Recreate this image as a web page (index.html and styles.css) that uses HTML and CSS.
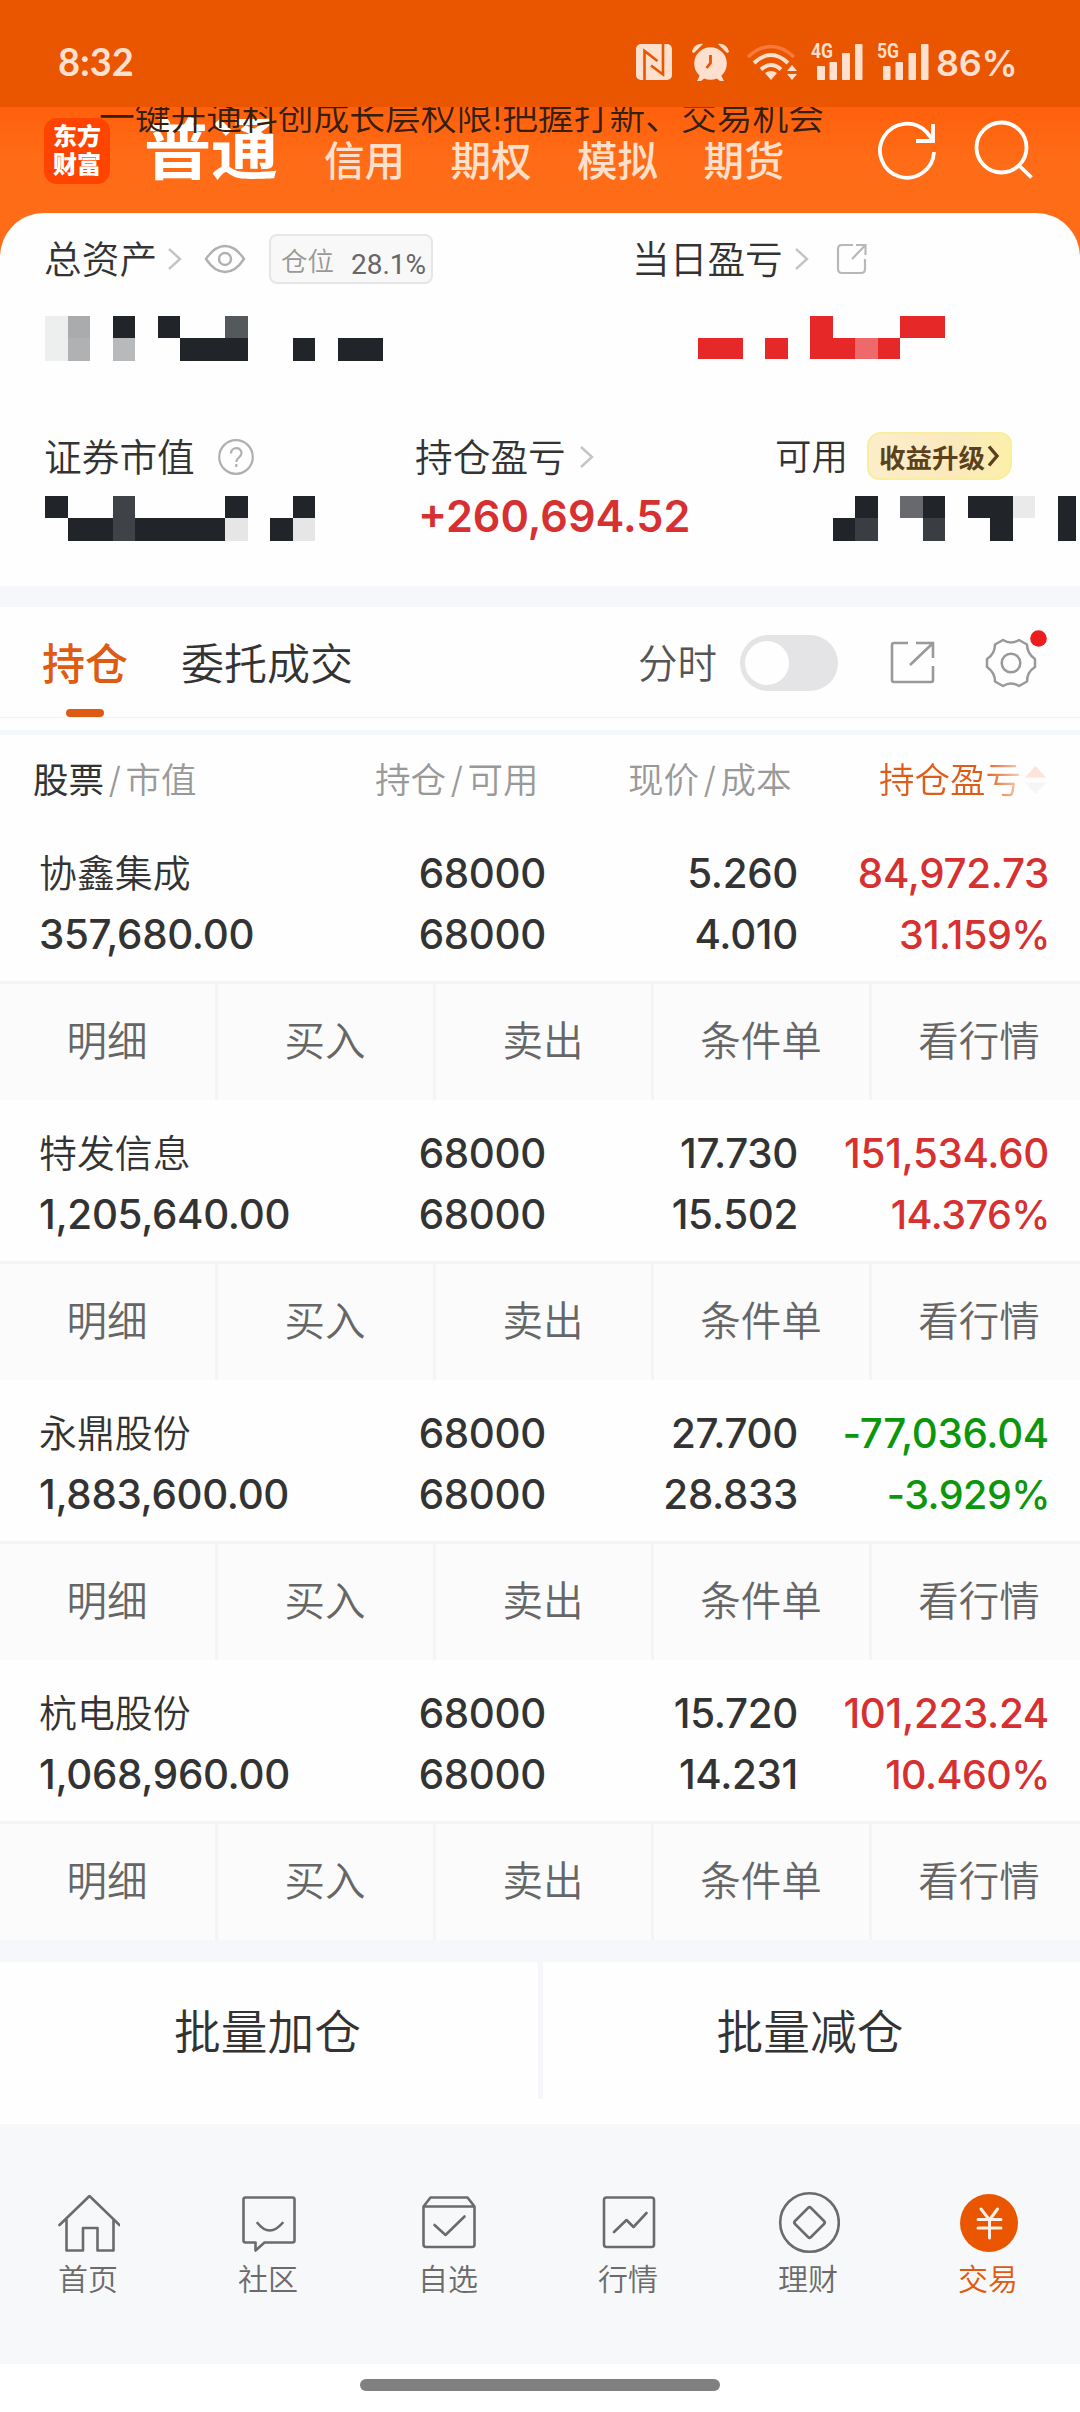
FILE: index.html
```html
<!DOCTYPE html>
<html lang="zh-CN">
<head>
<meta charset="utf-8">
<title>东方财富 交易</title>
<link rel="stylesheet" href="styles.css">
</head>
<body>
<svg width="0" height="0" class="defs">
  <symbol id="chev" viewBox="0 0 16 24"><path d="M2 2l11 10L2 22" fill="none" stroke="#c4c4c4" stroke-width="2.4"/></symbol>
</svg>
<div class="phone">
  <header class="status">
    <span class="clock">8:32</span>
    <svg class="status-icons" width="294" height="52" viewBox="636 34 294 52">
      <g fill="#ffdfcd">
        <rect x="636" y="44" width="36" height="36" rx="5"/>
        <path d="M644.500 80V51l13 10" fill="none" stroke="#ea5500" stroke-width="2.600"/>
        <path d="M663 44v30.500l-12-9" fill="none" stroke="#ea5500" stroke-width="2.600"/>
        <circle cx="710.500" cy="63.500" r="16.300"/>
        <path d="M692 52c1-5 5-9 11-8l-9 9zM729 52c-1-5-5-9-11-8l9 9zM700 75l-3 6h4l5-4zM721 75l3 6h-4l-5-4z"/>
        <path d="M710.500 55v8l-4 5" fill="none" stroke="#ea5500" stroke-width="2.800"/>
        <path d="M748 57q23-21 46 0" fill="none" stroke="#f9793d" stroke-width="3.500"/>
        <path d="M754 63q17-16 34 0M761 69.500q10-9 20 0" fill="none" stroke="#ffdfcd" stroke-width="4"/>
        <path d="M765 73q6-4 12 0l-6 7zM787 71l5-6 5 6zM787 74l5 6 5-6z"/>
        <rect x="817" y="66" width="8" height="14" rx="1"/><rect x="829.500" y="62" width="7.500" height="18" rx="1"/><rect x="842" y="53" width="8" height="27" rx="1"/><rect x="855" y="44" width="7.500" height="36" rx="1"/>
        <rect x="883" y="66" width="7.500" height="14" rx="1"/><rect x="895.500" y="62" width="7.500" height="18" rx="1"/><rect x="908.500" y="53" width="7.500" height="27" rx="1"/><rect x="921" y="44" width="7.500" height="36" rx="1"/>
      </g>
      <text x="811" y="58" textLength="22" lengthAdjust="spacingAndGlyphs" class="net">4G</text>
      <text x="877" y="58" textLength="22" lengthAdjust="spacingAndGlyphs" class="net">5G</text>
    </svg>
    <span class="battery">86%</span>
  </header>

  <div class="topbar">
    <div class="logo">东方<br>财富</div>
    <div class="mode mode-on">普通</div>
    <div class="mode">信用</div>
    <div class="mode">期权</div>
    <div class="mode">模拟</div>
    <div class="mode">期货</div>
    <svg class="top-icons" width="160" height="64" viewBox="875 118 160 64" fill="none" stroke="#fff" stroke-width="3.800">
      <path d="M934 152A27 27 0 1 1 926.500 132L933 140M933 124V141H916"/>
      <circle cx="1001.500" cy="147.500" r="25"/><path d="M1018.500 165l13 12.500"/>
    </svg>
    <div class="notice">一键开通科创成长层权限!把握打新、交易机会</div>
  </div>

  <section class="assets">
    <div class="line">
      <span class="label w-total">总资产</span>
      <svg width="16" height="24"><use href="#chev"/></svg>
      <svg class="eye" width="42" height="30" viewBox="0 0 42 30" fill="none" stroke="#b0b0b0" stroke-width="2.400"><path d="M2 15C8 6 14 2 21 2s13 4 19 13C34 24 28 28 21 28S8 24 2 15z"/><circle cx="21" cy="15" r="6"/></svg>
      <span class="ratio"><span class="ratio-k">仓位</span><span class="ratio-v">28.1%</span></span>
      <span class="label w-today">当日盈亏</span>
      <svg width="16" height="24"><use href="#chev"/></svg>
      <svg class="share" width="32" height="32" viewBox="0 0 32 32" fill="none" stroke="#b8b8b8" stroke-width="2.200"><path d="M17 2H6Q2 2 2 6v20q0 4 4 4h19q4 0 4-4V16M20 2h9.500v10M29 2.500L16 16"/></svg>
    </div>
    <svg class="mosaic" width="1035" height="45" viewBox="45 316 1035 45" shape-rendering="crispEdges">
      <g fill="#212529"><path d="M113 316h22v22h-22zM158 316h22v22h-22zM180 338h68v23h-68zM293 338h22v23h-22zM338 338h45v23h-45z"/></g>
      <path d="M45 316h23v45H45z" fill="#edefee"/><path d="M68 316h22v22H68z" fill="#a9abad"/><path d="M68 338h22v23H68z" fill="#afb1b3"/><path d="M113 338h22v23h-22z" fill="#b7b9bb"/><path d="M225 316h23v22h-23z" fill="#54595b"/>
      <path d="M698 338h45v21h-45zM765 338h23v21h-23zM810 316h23v22h67v21h-90zM900 316h45v22h-45z" fill="#e62828"/><path d="M855 338h23v21h-23z" fill="#ee696a"/>
    </svg>
    <div class="line line-b">
      <span class="label w-market">证券市值</span>
      <svg width="38" height="38" viewBox="0 0 38 38" fill="none" stroke="#b0b0b0" stroke-width="2.200"><circle cx="19" cy="19" r="16.800"/><path d="M14 15.500c0-7 10.500-7 10.500-.5 0 4.500-5.200 4.500-5.200 9M19.300 26v3"/></svg>
      <span class="label w-profit">持仓盈亏</span>
      <svg width="16" height="24"><use href="#chev"/></svg>
      <span class="label w-avail">可用</span>
      <span class="upgrade">收益升级<svg width="13" height="24" viewBox="0 0 13 24"><path d="M2 2.500l8 9.500-8 9.500" fill="none" stroke="#5c421c" stroke-width="3.400"/></svg></span>
    </div>
    <div class="figures">
      <svg width="270" height="45" viewBox="45 496 270 45" shape-rendering="crispEdges">
        <path d="M45 496h23v22H45zM68 518h157v23H68zM225 496h23v22h-23zM293 496h22v22h-22zM270 518h23v23h-23z" fill="#212529"/>
        <path d="M113 496h22v45h-22z" fill="#3f4246"/><path d="M225 518h23v23h-23zM293 518h22v23h-22z" fill="#e6e6e6"/>
      </svg>
      <span class="gain">+260,694.52</span>
      <svg width="244" height="45" viewBox="833 496 244 45" shape-rendering="crispEdges">
        <path d="M855 496h23v22h-23zM833 518h22v23h-22zM923 496h22v22h-22zM968 496h45v45h-23v-23h-22zM1058 496h18v45h-18z" fill="#212529"/>
        <path d="M855 518h23v23h-23zM923 518h22v23h-22z" fill="#3a3d41"/><path d="M900 496h23v22h-23z" fill="#68696c"/><path d="M1013 496h22v22h-22z" fill="#e9eae9"/>
      </svg>
    </div>
  </section>

  <section class="tabs">
    <span class="tab tab-on">持仓</span>
    <span class="tab">委托成交</span>
    <span class="minute">分时</span>
    <span class="toggle"></span>
    <svg class="tool" width="46" height="46" viewBox="889 640 46 46" fill="none" stroke="#999" stroke-width="2.600"><path d="M908 643h-14q-2 0-2 2v35q0 2 2 2h37q2 0 2-2v-14M916 643h17v15M932 644l-22 21"/></svg>
    <svg class="gear" width="66" height="62" viewBox="984 628 66 62" fill="none" stroke="#999" stroke-width="2.500"><path d="M1003 640q8 5 16 0l8 4.500q0 9 8 14.500v8q-8 5-8 14.500l-8 4.500q-8-5-16 0l-8-4.500q0-9-8-14.500v-8q8-5 8-14.500z" stroke-linejoin="round"/><circle cx="1011" cy="663" r="9.300"/><circle cx="1038.500" cy="638.500" r="8.300" fill="#ee1c1c" stroke="none"/></svg>
  </section>
  <div class="rule"></div>

  <section class="table">
    <div class="thead">
      <span class="th th-1"><b>股票</b><i>/</i>市值</span>
      <span class="th th-2">持仓<i>/</i>可用</span>
      <span class="th th-3">现价<i>/</i>成本</span>
      <span class="th th-4">持仓盈亏</span>
      <svg class="sort" width="21" height="28" viewBox="0 0 21 28"><path d="M0 11.500L10.500 0 21 11.500z" fill="#fde3d8"/><path d="M0 16.500h21L10.500 28z" fill="#f5f5f5"/></svg>
    </div>

    <div class="stock up">
      <span class="name">协鑫集成</span><span>68000</span><span>5.260</span><span class="pl">84,972.73</span>
      <span class="value">357,680.00</span><span>68000</span><span>4.010</span><span class="pl pct">31.159%</span>
    </div>
    <div class="acts"><span>明细</span><span>买入</span><span>卖出</span><span>条件单</span><span>看行情</span></div>

    <div class="stock up">
      <span class="name">特发信息</span><span>68000</span><span>17.730</span><span class="pl">151,534.60</span>
      <span class="value">1,205,640.00</span><span>68000</span><span>15.502</span><span class="pl pct">14.376%</span>
    </div>
    <div class="acts"><span>明细</span><span>买入</span><span>卖出</span><span>条件单</span><span>看行情</span></div>

    <div class="stock down">
      <span class="name">永鼎股份</span><span>68000</span><span>27.700</span><span class="pl">-77,036.04</span>
      <span class="value">1,883,600.00</span><span>68000</span><span>28.833</span><span class="pl pct">-3.929%</span>
    </div>
    <div class="acts"><span>明细</span><span>买入</span><span>卖出</span><span>条件单</span><span>看行情</span></div>

    <div class="stock up">
      <span class="name">杭电股份</span><span>68000</span><span>15.720</span><span class="pl">101,223.24</span>
      <span class="value">1,068,960.00</span><span>68000</span><span>14.231</span><span class="pl pct">10.460%</span>
    </div>
    <div class="acts"><span>明细</span><span>买入</span><span>卖出</span><span>条件单</span><span>看行情</span></div>
  </section>

  <section class="batch"><span>批量加仓</span><span>批量减仓</span></section>

  <nav class="nav">
    <a><svg width="64" height="64" viewBox="54.500 2191 64 64"><path d="M58 2225l30-29 30 29M65 2219v31.500h16.500V2228H96v22.500h16V2219"/></svg>首页</a>
    <a><svg width="64" height="64" viewBox="235.500 2191 64 64"><path d="M245 2197.500h47q2 0 2 2v41q0 2-2 2h-28l-9 8v-8h-10q-2 0-2-2v-41q0-2 2-2zM257 2223q12 15 25 0"/></svg>社区</a>
    <a><svg width="64" height="64" viewBox="416.500 2191 64 64"><path d="M424 2206.500l7-9h37l7 9v38q0 2.500-2.500 2.500h-46q-2.500 0-2.500-2.500zM424 2206.500h51M435 2225l11 10 19-18.500"/></svg>自选</a>
    <a><svg width="64" height="64" viewBox="596 2191 64 64"><rect x="604" y="2197.500" width="50" height="49.500" rx="2.500"/><path d="M614 2232l12.500-12 7 7 13-14"/></svg>行情</a>
    <a><svg width="64" height="64" viewBox="776 2191 64 64"><circle cx="809.500" cy="2222.500" r="29.300"/><path d="M808 2208q1.500-1.500 3 0l13 13q1.500 1.500 0 3l-13 13q-1.500 1.500-3 0l-13-13q-1.500-1.500 0-3z"/></svg>理财</a>
    <a class="nav-on"><svg width="64" height="64" viewBox="956 2191 64 64"><circle class="coin" cx="989" cy="2223" r="29"/><path class="yen" d="M981 2209l8.500 11 8-11M978 2219.500h23M978 2228h23M989.500 2219v19"/></svg>交易</a>
  </nav>
  <footer class="homebar"><span></span></footer>
</div>
</body>
</html>
```

FILE: styles.css
```css
* { box-sizing: border-box; }
body {
  margin: 0;
  background: #fff;
  font-family: Inter, "Noto Sans CJK SC", sans-serif;
  color: #333;
}
.defs { position: absolute; }
svg { display: block; flex: none; }
span { white-space: nowrap; }
.phone { width: 1080px; height: 2412px; overflow: hidden; background: #fefefe; }

/* status bar */
.status {
  position: relative; z-index: 2;
  display: flex; height: 107px; padding-left: 58px;
  background: #ea5500; color: #ffdfcd;
}
.clock { width: 578px; margin-top: 40px; font: 700 38px/42px Lato, sans-serif; }
.status-icons { margin-top: 34px; }
.net { font: 700 20px Roboto, sans-serif; fill: #ffdfcd; }
.battery { margin: 42px 0 0 6px; font: 600 36px/42px Inter, sans-serif; letter-spacing: -0.300px; }

/* orange header */
.topbar {
  position: relative;
  display: flex; height: 150px; margin-bottom: -44px; padding-left: 44px;
  background: linear-gradient(#ff600c, #ff6c17 55px);
}
.logo {
  width: 66px; height: 66px; margin: 11px 34px 0 0; padding-top: 5px;
  border-radius: 13px; background: #ff4300; color: #fff;
  text-align: center; font-weight: 900; font-size: 24px; line-height: 28px;
}
.mode {
  width: 126.500px; margin-top: 29px;
  color: #ffe0cc; font-weight: 500; font-size: 40.500px; line-height: 51px;
}
.mode-on { width: 180px; margin-top: 9px; color: #fff; font-weight: 700; font-size: 67px; line-height: 68px; }
.top-icons { margin: 11px 0 0 45px; }
.notice {
  position: absolute; left: 99px; top: -13px;
  white-space: nowrap; font-weight: 350; font-size: 35.750px; line-height: 46px; color: #34200f;
}

/* asset card */
.assets {
  position: relative;
  height: 373px; padding: 20px 0 0 45px;
  border-radius: 44px 44px 0 0; background: #fefefe;
}
.line { display: flex; align-items: center; height: 52px; }
.label { font-weight: 350; font-size: 37.700px; line-height: 52px; text-indent: -1px; }
.w-total { width: 122px; }
.eye { margin-left: 21px; }
.ratio {
  display: flex; align-items: center;
  width: 164px; height: 50px; margin: 0 200px 0 23px; padding-left: 10px;
  border: 2px solid #e6e6e6; border-radius: 8px; background: #f8f8f8;
}
.ratio-k { width: 70px; font-weight: 350; font-size: 26.500px; color: #999; margin-top: 1px; }
.ratio-v { font: 400 28px/40px Roboto, sans-serif; color: #666; margin-top: 11px; }
.w-today { width: 161px; }
.share { margin-left: 26px; }
.mosaic { margin-top: 31px; }
.line-b { margin-top: 70px; }
.w-market { width: 172px; }
.w-profit { width: 163px; margin-left: 161px; }
.w-avail { width: 92px; margin-left: 180px; font-size: 36.500px; text-indent: 0; }
.upgrade {
  display: flex; align-items: center;
  width: 145px; height: 48px; margin-top: -2px; padding-left: 10px;
  border: 2px solid #f9ee9c; border-radius: 14px 12px 16px 12px;
  background: linear-gradient(100deg, #fdeecb, #fbe9bd 60%, #fcf0a8);
  color: #5c421c; font-weight: 700; font-size: 26.500px;
}
.upgrade svg { margin-left: 2px; }
.figures { display: flex; height: 45px; margin-top: 13px; }
.gain { width: 415px; margin: -4px 0 0 103px; color: #d63030; font-weight: 600; font-size: 43.200px; line-height: 48px; }

/* tab strip */
.tabs {
  display: flex; height: 132px; padding-left: 42px;
  border-top: 21px solid #f5f7fa; border-bottom: 1px solid #f3f3f3;
}
.tab { width: 281px; font-weight: 350; font-size: 43px; line-height: 114px; }
.tab-on { position: relative; width: 139px; color: #de5b14; font-weight: 500; }
.tab-on::after { content: ""; position: absolute; left: 24px; bottom: 0; width: 38px; height: 8px; border-radius: 4px; background: #de5b14; }
.minute { width: 102px; margin-left: 176px; font-weight: 350; font-size: 39.500px; line-height: 114px; color: #555; }
.toggle { width: 98px; height: 56px; margin-top: 28px; border-radius: 28px; background: #e4e4e6; }
.toggle::before { content: ""; display: block; width: 44px; height: 44px; margin: 6px 5px; border-radius: 50%; background: #fefefe; }
.tool { margin: 33px 0 0 51px; }
.gear { margin: 21px 0 0 49px; }
.rule { height: 17px; border-bottom: 5px solid #f5f8fa; }

/* holdings */
.thead { display: flex; height: 94px; padding-left: 33px; font-weight: 350; font-size: 35.500px; line-height: 91px; color: #999; }
.th b { font-weight: 400; color: #333; }
.th i { display: inline-block; width: 21.500px; text-align: center; font: 300 36px/60px Inter, sans-serif; }
.th-1 { width: 342px; }
.th-2 { width: 253px; }
.th-3 { width: 251px; }
.th-4 { width: 146px; color: transparent; background: linear-gradient(90deg, #dd5d18 72%, #fbdccd 100%); background-clip: text; -webkit-background-clip: text; }
.sort { margin-top: 31px; }
.stock {
  display: grid; grid-template-columns: 240px 267px 252px 251px; grid-auto-rows: 61px;
  height: 152px; padding: 14px 0 0 39px;
  font-size: 40.300px; line-height: 62px; font-weight: 550; letter-spacing: -0.300px; text-align: right;
}
.stock .name, .stock .value { text-align: left; }
.stock .name { font-weight: 350; font-size: 37.900px; line-height: 60px; letter-spacing: 0; }
.stock .pct { font-size: 39.500px; letter-spacing: -0.500px; margin-right: -1px; }
.up .pl { color: #d63030; }
.down .pl { color: #0c960c; }
.acts {
  display: flex; width: 1091px; height: 119px; margin-bottom: 9px;
  border-top: 3px solid #f4f4f4; background: #fbfbfb;
  color: #666; font-weight: 350; font-size: 40.500px; line-height: 116px;
}
.acts span { width: 218px; padding-right: 1px; border-right: 3px solid #f4f4f4; text-align: center; }
.acts:last-child { margin-bottom: 0; }

/* batch buttons */
.batch { display: flex; height: 184px; border-top: 22px solid #f6f7fa; font-weight: 350; font-size: 46.700px; line-height: 140px; text-align: center; }
.batch span { width: 537px; height: 137px; padding-right: 3px; }
.batch span:first-child { width: 543px; border-right: 5px solid #f6f7fa; }

/* bottom navigation */
.nav {
  display: grid; grid-template-columns: repeat(6, 180px);
  width: 1082px; height: 240px; margin-left: -2px; padding-top: 67px; background: #f7f8fa;
}
.nav a {
  display: flex; flex-direction: column; align-items: center;
  font-weight: 350; font-size: 30px; line-height: 48px; color: #6b6b6b;
}
.nav svg { fill: none; stroke: #6b6b6b; stroke-width: 2.600; stroke-linecap: round; stroke-linejoin: round; }
.nav .nav-on { color: #e2590f; }
.nav .coin { fill: #ea5500; stroke: none; }
.nav .yen { stroke: #ffefe5; stroke-width: 3; }
.homebar { height: 48px; background: #fff; display: flex; justify-content: center; padding-top: 15px; }
.homebar span { width: 360px; height: 12px; border-radius: 6px; background: #808080; }
```
